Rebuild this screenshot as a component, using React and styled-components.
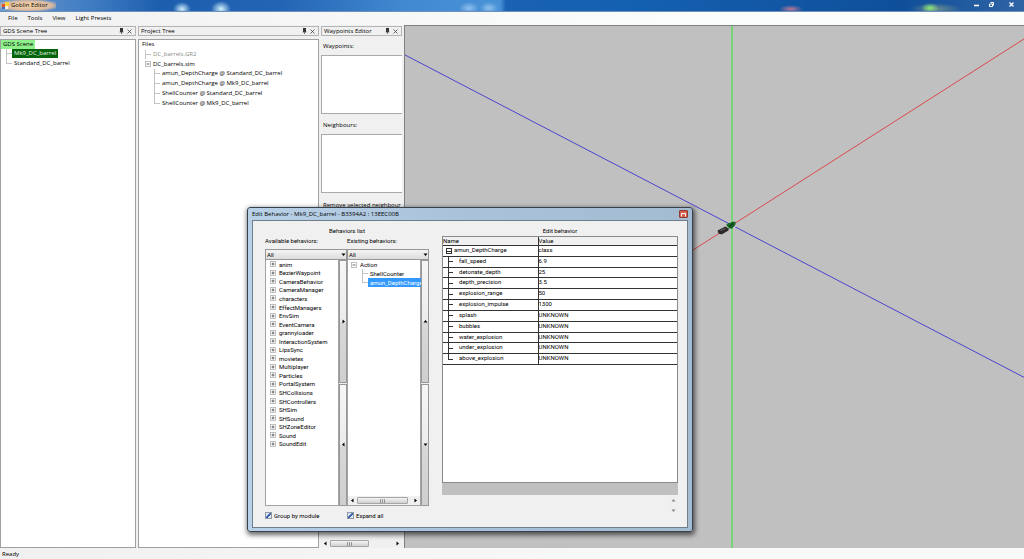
import {useState} from 'react';
import styled, {createGlobalStyle} from 'styled-components';

// data
const menuItems = ['File', 'Tools', 'View', 'Light Presets'];

const sceneTree = [
  {label: 'GDS Scene', depth: 0, mark: 'root'},
  {label: 'Mk9_DC_barrel', depth: 1, mark: 'active'},
  {label: 'Standard_DC_barrel', depth: 1, last: true},
];

const projectTree = [
  {label: 'Files', depth: 0},
  {label: 'DC_barrels.GR2', depth: 1, mark: 'muted'},
  {label: 'DC_barrels.sim', depth: 1, box: '-', last: true},
  {label: 'amun_DepthCharge @ Standard_DC_barrel', depth: 2},
  {label: 'amun_DepthCharge @ Mk9_DC_barrel', depth: 2},
  {label: 'ShellCounter @ Standard_DC_barrel', depth: 2},
  {label: 'ShellCounter @ Mk9_DC_barrel', depth: 2, last: true},
];

const modules = [
  'anim', 'BezierWaypoint', 'CameraBehavior', 'CameraManager', 'characters',
  'EffectManagers', 'EnvSim', 'EventCamera', 'grannyloader', 'InteractionSystem',
  'LipsSync', 'movietex', 'Multiplayer', 'Particles', 'PortalSystem',
  'SHCollisions', 'SHControllers', 'SHSim', 'SHSound', 'SHZoneEditor',
  'Sound', 'SoundEdit',
];

const properties = [
  ['fall_speed', '6.9'],
  ['detonate_depth', '25'],
  ['depth_precision', '3.5'],
  ['explosion_range', '50'],
  ['explosion_impulse', '1300'],
  ['splash', 'UNKNOWN'],
  ['bubbles', 'UNKNOWN'],
  ['water_explosion', 'UNKNOWN'],
  ['under_explosion', 'UNKNOWN'],
  ['above_explosion', 'UNKNOWN'],
];

// icons
const AppIcon = () => (
  <svg width="7" height="8" viewBox="0 0 7 8">
    <rect x="0" y="2" width="3" height="3" fill="#e8502a" />
    <rect x="3" y="0" width="4" height="4" fill="#ffd23c" />
    <rect x="3" y="4" width="3" height="3" fill="#f4f0e0" />
    <rect x="0" y="5" width="3" height="2" fill="#3a6fc4" />
  </svg>
);

const PinIcon = () => (
  <svg width="5" height="6" viewBox="0 0 5 6">
    <path d="M1 0h3v4H1z" fill="#333" />
    <path d="M0.5 4h4M2.5 4v2" stroke="#555" strokeWidth="0.8" />
  </svg>
);

const CloseIcon = () => (
  <svg width="5" height="5" viewBox="0 0 5 5">
    <path d="M0.5 0.5l4 4M4.5 0.5l-4 4" stroke="#444" strokeWidth="0.8" />
  </svg>
);

const arrowPaths = {
  left: 'M3.5 0.5v4L1 2.5z',
  right: 'M1.5 0.5v4L4 2.5z',
  up: 'M0.5 3.5h4L2.5 1z',
  down: 'M0.5 1.5h4L2.5 4z',
};

const Arrow = ({dir, color = '#000'}) => (
  <svg width="5" height="5" viewBox="0 0 5 5">
    <path d={arrowPaths[dir]} fill={color} />
  </svg>
);

const ExpandBox = ({sign}) => (
  <svg width="6" height="6" viewBox="0 0 6 6">
    <rect x="0.5" y="0.5" width="5" height="5" fill="#fff" stroke="#b0b0b0" strokeWidth="0.8" />
    <path d={sign === '+' ? 'M1.5 3h3M3 1.5v3' : 'M1.5 3h3'} stroke="#444" strokeWidth="0.8" />
  </svg>
);

const Panel = ({title, children}) => (
  <PanelColumn>
    <PanelHeader>
      <h2>{title}</h2>
      <IconButton aria-label={`Pin ${title}`}><PinIcon /></IconButton>
      <IconButton aria-label={`Close ${title}`}><CloseIcon /></IconButton>
    </PanelHeader>
    {children}
  </PanelColumn>
);

const Tree = ({rows, height}) => (
  <TreeList $height={height}>
    {rows.map(row => (
      <TreeRow key={row.label} $depth={row.depth}>
        {row.box && <ExpandBox sign={row.box} />}
        {!row.box && row.depth > 0 && <Branch $last={row.last} />}
        <TreeLabel $mark={row.mark}>{row.label}</TreeLabel>
      </TreeRow>
    ))}
  </TreeList>
);

const Combo = ({label}) => (
  <ComboWrap>
    <select aria-label={label}>
      <option>All</option>
    </select>
    <Arrow dir="down" />
  </ComboWrap>
);

const ScrollBar = ({size}) => (
  <ScrollTrack>
    <IconButton aria-label="Scroll left"><Arrow dir="left" /></IconButton>
    <ScrollRail>
      <ScrollThumb $size={size}>
        <svg width="5" height="4" viewBox="0 0 5 4">
          <path d="M0.5 0v4M2.5 0v4M4.5 0v4" stroke="#777" strokeWidth="0.7" />
        </svg>
      </ScrollThumb>
    </ScrollRail>
    <IconButton aria-label="Scroll right"><Arrow dir="right" /></IconButton>
  </ScrollTrack>
);

const Scene = () => (
  <Viewport>
    <svg viewBox="0 0 620 523" preserveAspectRatio="none">
      <path d="M0 29L620 352" stroke="#4a44cc" strokeWidth="1" />
      <path d="M620 13L250 249" stroke="#dc484c" strokeWidth="1" />
      <path d="M327.5 0V523" stroke="#5cdc5a" strokeWidth="1.4" />
      {/* barrel */}
      <path d="M313 205l8-4 3 1 0 3-7 4-3-1z" fill="#2b2828" />
      <path d="M316 205l5-2" stroke="#777" strokeWidth="0.8" />
      {/* rack */}
      <path d="M322 199l4-3 5 0v3l-3 4-5 0z" fill="#12681f" />
      <path d="M325 201l4-3" stroke="#1d2f1d" strokeWidth="1.2" />
      <path d="M325 197l2-1M329 202l2-1M322 201l2 1" stroke="#e8f2e8" strokeWidth="1" />
    </svg>
  </Viewport>
);

const EditBehavior = () => {
  const [grouped, setGrouped] = useState(true);
  const [expanded, setExpanded] = useState(true);

  const renderProperties = () => {
    return properties.map(([name, value], i) => {
      return (
        <tr key={name}>
          <StemCell $last={i === properties.length - 1}>{name}</StemCell>
          <td>{value}</td>
        </tr>
      )
    })
  }

  return (
    <Dialog role="dialog" aria-label="Edit Behavior">
      <DialogTitle>
        <h2>Edit Behavior - Mk9_DC_barrel - B3394A2 : 13EEC00B</h2>
        <DialogClose aria-label="Close">
          <svg width="5" height="5" viewBox="0 0 5 5">
            <path d="M0.5 4.5v-3h4v3" stroke="#fff" strokeWidth="1" fill="none" />
          </svg>
        </DialogClose>
      </DialogTitle>
      <DialogBody>
        <ListsGroup>
          <GroupTitle>Behaviors list</GroupTitle>
          <ListsGrid>
            <ListHeading>Available behaviors:</ListHeading>
            <ListHeading>Existing behaviors:</ListHeading>
            <Combo label="Available behaviors filter" />
            <Combo label="Existing behaviors filter" />
            <ListPair>
              <ListBox>
                <ModuleList>
                  {modules.map(name => (
                    <li key={name}><ExpandBox sign="+" />{name}</li>
                  ))}
                </ModuleList>
              </ListBox>
              <MoveButtons>
                <button aria-label="Add behavior"><Arrow dir="right" /></button>
                <button aria-label="Remove behavior"><Arrow dir="left" /></button>
              </MoveButtons>
            </ListPair>
            <ListPair>
              <ListBox>
                <ExistingTree>
                  <Tree
                    height={26}
                    rows={[
                      {label: 'Action', depth: 0, box: '-'},
                      {label: 'ShellCounter', depth: 1},
                      {label: 'amun_DepthCharge', depth: 1, mark: 'selected', last: true},
                    ]}
                  />
                </ExistingTree>
                <ScrollBar size="95%" />
              </ListBox>
              <MoveButtons>
                <button aria-label="Move up"><Arrow dir="up" /></button>
                <button aria-label="Move down"><Arrow dir="down" /></button>
              </MoveButtons>
            </ListPair>
            <CheckLabel>
              <input type="checkbox" checked={grouped} onChange={() => setGrouped(!grouped)} />
              Group by module
            </CheckLabel>
            <CheckLabel>
              <input type="checkbox" checked={expanded} onChange={() => setExpanded(!expanded)} />
              Expand all
            </CheckLabel>
          </ListsGrid>
        </ListsGroup>
        <EditGroup>
          <GroupTitle>Edit behavior</GroupTitle>
          <TableView>
            <PropertyTable>
              <thead>
                <tr><th>Name</th><th>Value</th></tr>
              </thead>
              <tbody>
                <tr>
                  <td><ClassCell><ClassBox />amun_DepthCharge</ClassCell></td>
                  <td>class</td>
                </tr>
                {renderProperties()}
              </tbody>
            </PropertyTable>
          </TableView>
          <GreyStrip />
          <Description>
            <Arrow dir="up" color="#888" />
            <Arrow dir="down" color="#888" />
          </Description>
        </EditGroup>
      </DialogBody>
    </Dialog>
  )
}

const App = () => {
  return (
    <Page>
      <GlobalStyle />
      <TitleBar>
        <TitleGlow>
          <AppIcon />
          <h1>Goblin Editor</h1>
        </TitleGlow>
        <WindowButtons>
          <button aria-label="Minimize">
            <svg width="7" height="7" viewBox="0 0 7 7"><path d="M1 4.5h5" stroke="#fff" strokeWidth="1.6" /></svg>
          </button>
          <button aria-label="Restore">
            <svg width="7" height="7" viewBox="0 0 7 7">
              <path d="M2.5 1.5h3v3M1.5 3h3v2.5h-3z" stroke="#fff" fill="none" />
            </svg>
          </button>
          <button aria-label="Close">
            <svg width="7" height="7" viewBox="0 0 7 7"><path d="M1.5 1.5l4 4M5.5 1.5l-4 4" stroke="#fff" strokeWidth="1.3" /></svg>
          </button>
        </WindowButtons>
      </TitleBar>
      <MenuBar>
        {menuItems.map(item => <button key={item}>{item}</button>)}
      </MenuBar>
      <Workspace>
        <Panel title="GDS Scene Tree">
          <TreeBox><Tree rows={sceneTree} height={28} /></TreeBox>
        </Panel>
        <Panel title="Project Tree">
          <TreeBox $inset><Tree rows={projectTree} height={68} /></TreeBox>
        </Panel>
        <Panel title="Waypoints Editor">
          <Waypoints>
            <h3>Waypoints:</h3>
            <WaypointBox />
            <h3>Neighbours:</h3>
            <WaypointBox />
            <RemoveButton>Remove selected neighbour</RemoveButton>
          </Waypoints>
          <ScrollBar size="62%" />
        </Panel>
        <Scene />
      </Workspace>
      <StatusBar>Ready</StatusBar>
      <EditBehavior />
    </Page>
  );
};

export default App;

const GlobalStyle = createGlobalStyle`
  * {
    box-sizing: border-box;
  }
  body {
    margin: 0;
    color: #000;
    background-color: #f0f0f0;
    font-family: 'Open Sans', 'Noto Sans', sans-serif;
    font-size: 6px;
    line-height: 9px;
  }
  h1, h2, h3, ul {
    margin: 0;
    padding: 0;
    font: inherit;
    list-style: none;
  }
  button, select {
    margin: 0;
    padding: 0;
    border: 0;
    color: inherit;
    background: none;
    font: inherit;
  }
  svg {
    display: block;
    flex: none;
  }
`;

const Page = styled.div`
  position: relative;
  display: flex;
  flex-direction: column;
  height: 100vh;
  overflow: hidden;
`;

const TitleBar = styled.header`
  display: flex;
  justify-content: space-between;
  height: 12px;
  border-bottom: 1px solid #6d8fb8;
  background:
    radial-gradient(ellipse 9px 7px at 182px 9px, #cdeefa, transparent),
    radial-gradient(ellipse 10px 8px at 221px 9px, #d5f4fc, transparent),
    radial-gradient(ellipse 10px 6px at 469px 8px, #8fc0ec, transparent),
    radial-gradient(ellipse 9px 6px at 489px 8px, #8fc0ec, transparent),
    radial-gradient(ellipse 12px 4px at 791px 9px, #b87896, transparent),
    radial-gradient(ellipse 9px 5px at 930px 8px, #8ce878, transparent),
    radial-gradient(ellipse 26px 6px at 936px 9px, #6b8d8e, transparent),
    linear-gradient(90deg, #6d9ad0 0, #3f7cc2 90px, #1d5eae 160px, #2464b4 280px, #4088d0 400px, #4a92d8 500px, #1a62b2 506px, #1460b0 640px, #0f4f9a 900px, #2f64a4 100%);
`;

const TitleGlow = styled.div`
  display: flex;
  align-items: center;
  gap: 2px;
  padding: 0 8px 0 2px;
  background: radial-gradient(ellipse at center, #f3cfa6 20%, #d9b9a0 60%, transparent 85%);
`;

const WindowButtons = styled.div`
  display: flex;
  align-items: center;
  gap: 8px;
  padding: 0 9px 2px 0;
  button:last-child {
    margin-left: 5px;
  }
`;

const MenuBar = styled.nav`
  display: flex;
  gap: 10px;
  height: 13px;
  padding: 0 8px;
  background: linear-gradient(90deg, #f1f1f1, #fbfdfc 70%);
`;

const Workspace = styled.main`
  flex: 1;
  display: grid;
  grid-template-columns: 136px 181px 81px 1fr;
  column-gap: 2px;
  min-height: 0;
`;

const PanelColumn = styled.section`
  display: flex;
  flex-direction: column;
  min-width: 0;
  padding-top: 1px;
`;

const PanelHeader = styled.div`
  display: flex;
  align-items: center;
  gap: 3px;
  height: 10px;
  padding: 0 3px 0 2px;
  border: 1px solid #b4b4b4;
  h2 {
    flex: 1;
    white-space: nowrap;
  }
`;

const IconButton = styled.button`
  display: flex;
  align-items: center;
`;

const TreeBox = styled.div`
  flex: 1;
  margin-top: 3px;
  padding: 0 ${({$inset}) => ($inset ? '3px' : '2px')};
  border: 1px solid #a0a0a0;
  background-color: #fff;
`;

const TreeList = styled.ul`
  display: grid;
  grid-auto-rows: 1fr;
  height: ${({$height}) => $height}px;
`;

const TreeRow = styled.li`
  display: flex;
  align-items: center;
  gap: 2px;
  padding-left: ${({$depth}) => [0, 3, 12][$depth]}px;
  white-space: nowrap;
`;

const Branch = styled.span`
  align-self: stretch;
  width: 6px;
  background:
    linear-gradient(#c4c4c4, #c4c4c4) 0 0 / 1px ${({$last}) => ($last ? '50%' : '100%')} no-repeat,
    linear-gradient(#c4c4c4, #c4c4c4) 0 50% / 6px 1px no-repeat;
`;

const markStyles = {
  root: 'background-color: #8df08a;',
  active: 'background-color: #04640a; color: #e4f4e4;',
  muted: 'color: #8a8a8a;',
  selected: 'background-color: #3399ff; color: #fff;',
};

const TreeLabel = styled.span`
  padding: 0 2px;
  margin-left: -2px;
  ${({$mark}) => markStyles[$mark]}
`;

const Waypoints = styled.div`
  flex: 1;
  overflow: hidden;
  h3 {
    padding: 6px 2px 4px;
  }
`;

const WaypointBox = styled.div`
  height: 59px;
  border: 1px solid #a9a9a9;
  border-right: 0;
  background-color: #fff;
  & + h3 {
    padding-top: 7px;
  }
`;

const RemoveButton = styled.button`
  padding: 8px 2px 0;
  white-space: nowrap;
`;

const ScrollTrack = styled.div`
  display: flex;
  justify-content: space-between;
  height: 9px;
  padding: 0 2px;
  background-color: #f0f0f0;
`;

const ScrollRail = styled.div`
  flex: 1;
  padding: 1px 2px;
`;

const ScrollThumb = styled.div`
  display: flex;
  align-items: center;
  justify-content: center;
  width: ${({$size}) => $size};
  height: 7px;
  border: 1px solid #a6a6a6;
  border-radius: 1px;
  background: linear-gradient(#f4f4f4, #d0d0d0);
`;

const Viewport = styled.div`
  border-top: 1px solid #808080;
  border-left: 1px solid #808080;
  background-color: #c0c0c0;
  overflow: hidden;
  svg {
    width: 100%;
    height: 100%;
  }
`;

const StatusBar = styled.footer`
  height: 11px;
  padding: 2px;
  background: linear-gradient(90deg, #f0f0f0, #f7f8f8 60%);
`;

/* floating dialog */
const Dialog = styled.div`
  position: absolute;
  left: 247px;
  top: 207px;
  width: 446px;
  padding: 0 4px 3px;
  border: 1px solid #37424c;
  border-radius: 3px;
  background: linear-gradient(90deg, #b9d1e8, #a9c2da 50%, #a3bcd2);
  box-shadow: 1px 2px 5px 1px rgba(0, 0, 0, 0.6);
`;

const DialogTitle = styled.div`
  display: flex;
  align-items: center;
  justify-content: space-between;
  height: 12px;
`;

const DialogClose = styled.button`
  display: flex;
  align-items: center;
  justify-content: center;
  width: 9px;
  height: 8px;
  border: 1px solid #8d3a30;
  border-radius: 1px;
  background-color: #d4604c;
`;

const DialogBody = styled.div`
  display: flex;
  gap: 13px;
  padding: 5px 9px 3px 12px;
  border: 1px solid #6e7e8c;
  background-color: #f0f0f0;
  font-family: Roboto, 'Liberation Sans', sans-serif;
`;

const ListsGroup = styled.section`
  width: 164px;
`;

const GroupTitle = styled.h3`
  height: 10px;
  text-align: center;
`;

const ListsGrid = styled.div`
  display: grid;
  grid-template-columns: 1fr 1fr;
  grid-template-rows: 13px 11px 246px 18px;
`;

const ListHeading = styled.span`
  white-space: nowrap;
`;

const ComboWrap = styled.div`
  display: grid;
  align-items: center;
  border: 1px solid #979797;
  background: linear-gradient(#f4f4f4, #dcdcdc);
  select {
    grid-area: 1 / 1;
    appearance: none;
    height: 9px;
    padding: 0 1px;
  }
  svg {
    grid-area: 1 / 1;
    justify-self: end;
    pointer-events: none;
  }
`;

const ListPair = styled.div`
  display: flex;
  min-width: 0;
`;

const ListBox = styled.div`
  flex: 1;
  display: flex;
  flex-direction: column;
  justify-content: space-between;
  min-width: 0;
  border: 1px solid #a3a3a3;
  border-top: 0;
  background-color: #fff;
`;

const ModuleList = styled.ul`
  display: grid;
  grid-auto-rows: 1fr;
  height: 188px;
  padding-left: 4px;
  li {
    display: flex;
    align-items: center;
    gap: 3px;
    min-height: 0;
  }
`;

const ExistingTree = styled.div`
  padding-left: 3px;
  ${TreeRow} {
    gap: 3px;
  }
  ${TreeRow} + ${TreeRow} {
    padding-left: 11px;
    gap: 2px;
  }
`;

const MoveButtons = styled.div`
  display: flex;
  flex-direction: column;
  gap: 1px;
  width: 8px;
  button {
    flex: 1;
    display: flex;
    align-items: center;
    justify-content: center;
    border: 1px solid #989898;
    background: linear-gradient(#f6f6f6, #ececec 50%, #d8d8d8 50%, #cfcfcf);
  }
`;

const CheckLabel = styled.label`
  display: flex;
  align-items: center;
  gap: 2px;
  input {
    appearance: none;
    width: 7px;
    height: 7px;
    margin: 0;
    border: 1px solid #8f9aa5;
    background-color: #fff;
  }
  input:checked {
    background: linear-gradient(135deg, #dfe8f4 30%, #3c5da8 45%, #3c5da8 60%, #dfe8f4 70%);
  }
`;

const EditGroup = styled.section`
  flex: 1;
`;

const TableView = styled.div`
  height: 247px;
  border: 1px solid #8a8a8a;
  background-color: #fff;
`;

const PropertyTable = styled.table`
  width: 100%;
  height: 128px;
  border-collapse: collapse;
  table-layout: fixed;
  line-height: 8px;
  th, td {
    padding: 0;
    border-bottom: 1px solid #333;
    text-align: left;
    font-weight: normal;
    vertical-align: top;
  }
  th:first-child, td:first-child {
    width: 95px;
    border-right: 1px solid #333;
  }
  th {
    background-color: #f0f0f0;
  }
`;

const ClassCell = styled.div`
  display: flex;
  gap: 2px;
`;

const ClassBox = styled.span`
  width: 6px;
  height: 6px;
  margin: 2px 0 0 3px;
  border: 1px solid #333;
  background: linear-gradient(#333, #333) center / 4px 1px no-repeat;
`;

const StemCell = styled.td`
  background:
    linear-gradient(#333, #333) 5px 0 / 1px ${({$last}) => ($last ? '50%' : '100%')} no-repeat,
    linear-gradient(#333, #333) 5px 50% / 5px 1px no-repeat;
  && {
    padding-left: 16px;
  }
  ${PropertyTable} & {
    padding-left: 16px;
  }
`;

const GreyStrip = styled.div`
  height: 12px;
  background-color: #c0c0c0;
`;

const Description = styled.div`
  display: flex;
  flex-direction: column;
  align-items: flex-end;
  gap: 5px;
  padding: 3px 2px;
`;
